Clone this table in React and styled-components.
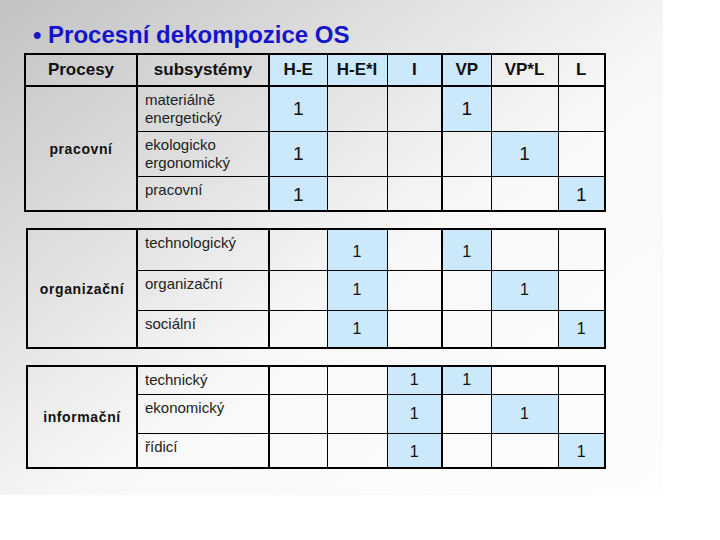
import React from "react";
import styled, { createGlobalStyle } from "styled-components";

const GlobalStyle = createGlobalStyle`
  html, body { margin: 0; padding: 0; background: #fff; }
  body { font-family: "Liberation Sans", Arial, sans-serif; }
`;

const BLUE = "#cce8fb";

const Slide = styled.div`
  width: 663px;
  height: 495px;
  box-sizing: border-box;
  padding: 22px 0 0 24px;
  background: linear-gradient(to bottom right, #c2c2c2 0%, #f8f8f8 56%, #fdfdfd 100%);
`;

const Title = styled.h1`
  margin: 0 0 5px;
  padding-left: 9px;
  font-size: 24px;
  line-height: 26px;
  font-weight: bold;
  color: #1414c8;
`;

const Blocks = styled.div`
  display: flex;
  flex-direction: column;
  gap: 16px;
`;

const Table = styled.table`
  border-collapse: collapse;
  table-layout: fixed;
  width: ${(p) => p.$width}px;
  margin-left: ${(p) => p.$offset || 0}px;
  border: 2px solid #000;
`;

const Row = styled.tr`
  height: ${(p) => p.$h}px;
`;

const HeadCell = styled.th`
  border: 1px solid #000;
  border-bottom-width: 2px;
  border-left-width: ${(p) => (p.$thick ? 2 : 1)}px;
  background: ${(p) => (p.$on ? BLUE : "transparent")};
  padding: 0;
  font-size: 17px;
  font-weight: bold;
  color: #111;
  text-align: center;
  vertical-align: middle;
`;

const ProcessCell = styled.td`
  border: 1px solid #000;
  padding: 0;
  font-size: 14px;
  font-weight: bold;
  letter-spacing: 0.6px;
  color: #111;
  text-align: center;
  vertical-align: middle;
`;

const NameCell = styled.td`
  border: 1px solid #000;
  border-left-width: 2px;
  padding: 4px 6px 0 7px;
  font-size: 15px;
  line-height: 18px;
  color: #222;
  vertical-align: top;
`;

const ValueCell = styled.td`
  border: 1px solid #000;
  border-left-width: ${(p) => (p.$thick ? 2 : 1)}px;
  background: ${(p) => (p.$on ? BLUE : "transparent")};
  padding: ${(p) => (p.$low ? "4px 0 0" : "0")};
  font-size: ${(p) => p.$size}px;
  color: #111;
  text-align: center;
  vertical-align: middle;
`;

const HEADERS = [
  { t: "H-E", on: true, thick: true },
  { t: "H-E*I", on: true },
  { t: "I", on: true },
  { t: "VP", on: true, thick: true },
  { t: "VP*L" },
  { t: "L" },
];

const VALUE_COLS = [58, 60, 55, 49, 67, 47];

const BLOCKS = [
  {
    label: "pracovní",
    header: true,
    first: 112,
    offset: 0,
    size: 19,
    rows: [
      { name: "materiálně energetický", h: 45, ones: [0, 3] },
      { name: "ekologicko ergonomický", h: 45, ones: [0, 4] },
      { name: "pracovní", h: 35, ones: [0, 5], low: true },
    ],
  },
  {
    label: "organizační",
    first: 110,
    offset: 2,
    size: 16,
    rows: [
      { name: "technologický", h: 41, ones: [1, 3], low: true },
      { name: "organizační", h: 40, ones: [1, 4] },
      { name: "sociální", h: 38, ones: [1, 5] },
    ],
  },
  {
    label: "informační",
    first: 110,
    offset: 2,
    size: 16,
    rows: [
      { name: "technický", h: 28, ones: [2, 3] },
      { name: "ekonomický", h: 39, ones: [2, 4] },
      { name: "řídicí", h: 35, ones: [2, 5], low: true },
    ],
  },
];

function Block({ block }) {
  const width = block.first + 132 + VALUE_COLS.reduce((a, b) => a + b, 0);
  return (
    <Table $width={width} $offset={block.offset}>
      <colgroup>
        <col style={{ width: block.first }} />
        <col style={{ width: 132 }} />
        {VALUE_COLS.map((w, i) => (
          <col key={i} style={{ width: w }} />
        ))}
      </colgroup>
      <tbody>
        {block.header && (
          <Row $h={32}>
            <HeadCell>Procesy</HeadCell>
            <HeadCell $thick>subsystémy</HeadCell>
            {HEADERS.map((h) => (
              <HeadCell key={h.t} $on={h.on} $thick={h.thick}>
                {h.t}
              </HeadCell>
            ))}
          </Row>
        )}
        {block.rows.map((r, ri) => (
          <Row key={r.name} $h={r.h}>
            {ri === 0 && (
              <ProcessCell rowSpan={block.rows.length}>{block.label}</ProcessCell>
            )}
            <NameCell>{r.name}</NameCell>
            {HEADERS.map((h, ci) => {
              const on = r.ones.includes(ci);
              return (
                <ValueCell
                  key={h.t}
                  $on={on}
                  $thick={h.thick}
                  $size={block.size}
                  $low={r.low}
                >
                  {on ? "1" : ""}
                </ValueCell>
              );
            })}
          </Row>
        ))}
      </tbody>
    </Table>
  );
}

export default function App() {
  return (
    <>
      <GlobalStyle />
      <Slide>
        <Title>• Procesní dekompozice OS</Title>
        <Blocks>
          {BLOCKS.map((b) => (
            <Block key={b.label} block={b} />
          ))}
        </Blocks>
      </Slide>
    </>
  );
}
